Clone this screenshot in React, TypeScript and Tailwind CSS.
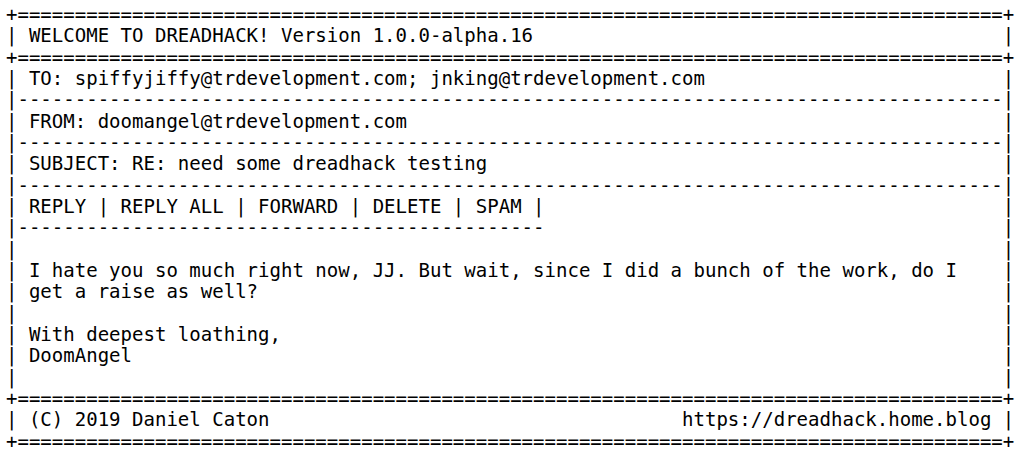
import React from "react";

const W = 88;
const border = (corner: string, fill: string) => corner + fill.repeat(W - 2) + corner;
const row = (s: string) => "| " + s.padEnd(W - 3) + "|";
const blank = () => "|" + " ".repeat(W - 2) + "|";
const rule = () => "|" + "-".repeat(W - 2) + "|";

const right = "https://dreadhack.home.blog ";
const left = "(C) 2019 Daniel Caton";

const lines: string[] = [
  border("+", "="),
  row("WELCOME TO DREADHACK! Version 1.0.0-alpha.16"),
  border("+", "="),
  row("TO: spiffyjiffy@trdevelopment.com; jnking@trdevelopment.com"),
  rule(),
  row("FROM: doomangel@trdevelopment.com"),
  rule(),
  row("SUBJECT: RE: need some dreadhack testing"),
  rule(),
  row("REPLY | REPLY ALL | FORWARD | DELETE | SPAM |"),
  ("|" + "-".repeat(46)).padEnd(W - 1) + "|",
  blank(),
  row("I hate you so much right now, JJ. But wait, since I did a bunch of the work, do I"),
  row("get a raise as well?"),
  blank(),
  row("With deepest loathing,"),
  row("DoomAngel"),
  blank(),
  border("+", "="),
  "| " + left.padEnd(W - 3 - right.length) + right + "|",
  border("+", "="),
];

export default function App() {
  return (
    <div className="w-[1024px] h-[457px] bg-white overflow-hidden pl-[6px] pt-[4px]">
      <div className="font-['DejaVu_Sans_Mono',monospace] text-[19.05px] leading-[21.33px] text-black">
        {lines.map((l, i) => (
          <div key={i} className="whitespace-pre">
            {l}
          </div>
        ))}
      </div>
    </div>
  );
}
